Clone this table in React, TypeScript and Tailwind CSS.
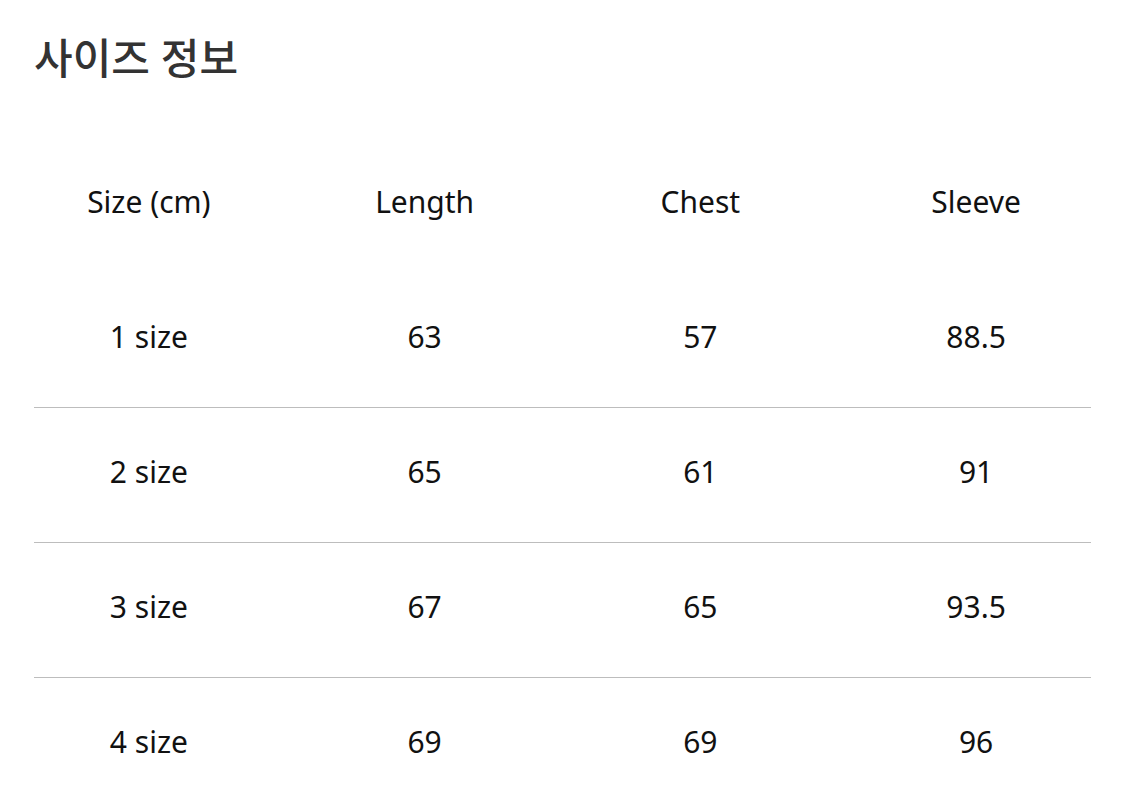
import React from 'react';

const headers = ['Size (cm)', 'Length', 'Chest', 'Sleeve'];

const rows = [
    ['1 size', '63', '57', '88.5'],
    ['2 size', '65', '61', '91'],
    ['3 size', '67', '65', '93.5'],
    ['4 size', '69', '69', '96'],
];

function Row({ cells, divider }: { cells: string[]; divider: boolean }) {
    return (
        <div className="h-[135px] flex flex-col">
            <div className="flex-1 grid grid-cols-4 px-[11px] pb-[8px] items-center">
                {cells.map((c, i) => (
                    <div key={i} className="text-center text-[30px] text-[#111]">{c}</div>
                ))}
            </div>
            {divider && <div className="mx-[34px] border-t border-[#bdbdbd]" />}
        </div>
    );
}

export default function App() {
    return (
        <div
            className="w-[1125px] h-[802px] bg-white overflow-hidden"
            style={{ fontFamily: '"Noto Sans", "Noto Sans CJK KR", sans-serif' }}
        >
            <h1 className="pl-[34px] pt-[30px] text-[42px] leading-[56px] font-medium text-[#333]">
                사이즈 정보
            </h1>
            <div className="mt-[52px]">
                <Row cells={headers} divider={false} />
                {rows.map((r, i) => (
                    <Row key={i} cells={r} divider={i < rows.length - 1} />
                ))}
            </div>
        </div>
    );
}
